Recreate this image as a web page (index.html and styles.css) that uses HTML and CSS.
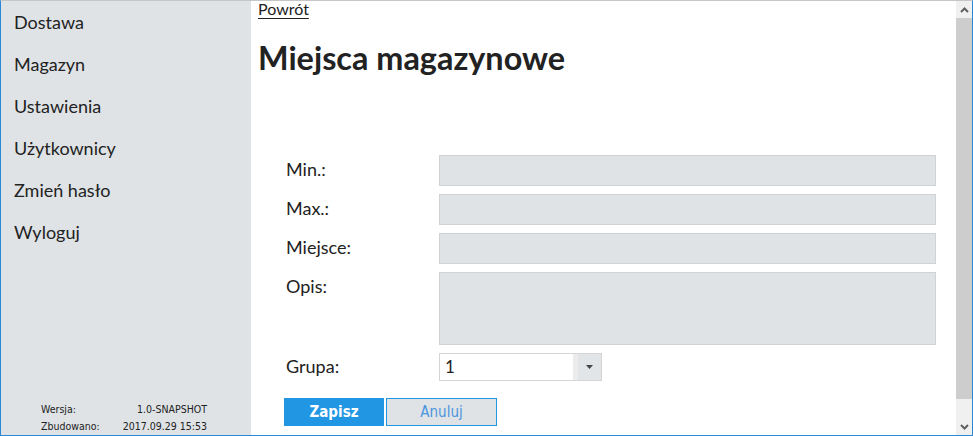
FILE: index.html
```html
<!DOCTYPE html>
<html lang="pl">
<head>
<meta charset="utf-8">
<title>Miejsca magazynowe</title>
<link rel="stylesheet" href="styles.css">
</head>
<body>
<div class="window">
  <aside class="sidebar">
    <nav class="menu">
      <a href="#">Dostawa</a>
      <a href="#">Magazyn</a>
      <a href="#">Ustawienia</a>
      <a href="#">Użytkownicy</a>
      <a href="#">Zmień hasło</a>
      <a href="#">Wyloguj</a>
    </nav>
    <dl class="build">
      <dt>Wersja:</dt><dd>1.0-SNAPSHOT</dd>
      <dt>Zbudowano:</dt><dd>2017.09.29 15:53</dd>
    </dl>
  </aside>
  <main class="content">
    <a class="back" href="#">Powrót</a>
    <h1 class="title">Miejsca magazynowe</h1>
    <form class="form">
      <label class="label">Min.:</label>
      <div class="field"></div>
      <label class="label">Max.:</label>
      <div class="field"></div>
      <label class="label">Miejsce:</label>
      <div class="field"></div>
      <label class="label">Opis:</label>
      <div class="field field-area"></div>
      <label class="label label-select">Grupa:</label>
      <div class="select">
        <span class="select-value">1</span>
        <span class="select-sep"></span>
        <span class="select-btn"><svg width="7" height="4" viewBox="0 0 7 4"><path d="M0 0h7L3.5 4z" fill="#444"/></svg></span>
      </div>
      <div class="actions">
        <button type="button" class="btn btn-primary">Zapisz</button>
        <button type="button" class="btn btn-secondary">Anuluj</button>
      </div>
    </form>
  </main>
  <div class="scrollbar">
    <div class="sb-btn"><svg width="9" height="6" viewBox="0 0 9 6"><path d="M1 5L4.5 1.5L8 5" fill="none" stroke="#606060" stroke-width="2"/></svg></div>
    <div class="sb-thumb"></div>
    <div class="sb-track"></div>
    <div class="sb-btn"><svg width="9" height="6" viewBox="0 0 9 6"><path d="M1 1L4.5 4.5L8 1" fill="none" stroke="#606060" stroke-width="2"/></svg></div>
  </div>
</div>
</body>
</html>
```

FILE: styles.css
```css
* { box-sizing: border-box; }
html, body { margin: 0; padding: 0; }
body {
  font-family: Lato, "Noto Sans", sans-serif;
  color: #222;
  background: #fff;
}
.window {
  width: 973px;
  height: 436px;
  border-top: 1px solid #c6c6c6;
  border-left: 1px solid #2a88d6;
  border-right: 1px solid #2a88d6;
  border-bottom: 1px solid #2a88d6;
  display: flex;
  overflow: hidden;
}
.sidebar {
  width: 250px;
  flex: none;
  background: #dfe3e6;
  display: flex;
  flex-direction: column;
  justify-content: space-between;
}
.menu {
  display: flex;
  flex-direction: column;
  padding-left: 13px;
}
.menu a {
  font-size: 18px;
  line-height: 42px;
  color: #222;
  text-decoration: none;
}
.build {
  margin: 0 0 0 40px;
  width: 166px;
  display: grid;
  grid-template-columns: 1fr auto;
  font-family: "DejaVu Sans Condensed", "DejaVu Sans", sans-serif;
  font-size: 10.5px;
  line-height: 17px;
  color: #222;
}
.build dt, .build dd { margin: 0; }
.build dd { text-align: right; }
.content {
  flex: 1;
  min-width: 0;
  padding-left: 7px;
}
.back {
  display: block;
  width: max-content;
  font-size: 16px;
  line-height: 16px;
  color: #222;
  text-decoration: underline;
  text-underline-offset: 3px;
}
.title {
  margin: 22px 0 78px;
  font-size: 32.4px;
  line-height: 38px;
  font-weight: 700;
  color: #222;
}
.form {
  margin-left: 26px;
  width: 652px;
  display: grid;
  grid-template-columns: 155px 497px;
  row-gap: 8px;
  align-items: start;
}
.label {
  padding: 3px 0 0 2px;
  font-size: 18px;
  line-height: normal;
}
.label-select { padding-top: 2px; }
.field {
  height: 31px;
  background: #dfe3e6;
  border: 1px solid #cfd3d6;
}
.field-area { height: 73px; }
.select {
  width: 163px;
  height: 28px;
  border: 1px solid #d4d4d4;
  background: #fff;
  display: flex;
}
.select-value {
  flex: 1;
  padding-left: 5px;
  font-size: 17px;
  line-height: 26px;
}
.select-sep {
  width: 5px;
  background: #ececec;
}
.select-btn {
  width: 23px;
  background: #e1e5e8;
  display: flex;
  align-items: center;
  justify-content: center;
}
.actions {
  grid-column: 1 / -1;
  margin-top: 9px;
  display: flex;
  gap: 2px;
}
.btn {
  height: 28px;
  padding: 0;
  font-family: "DejaVu Sans Condensed", "DejaVu Sans", sans-serif;
  font-size: 15px;
  border: 1px solid #2196e3;
}
.btn-primary {
  width: 100px;
  background: #2196e3;
  color: #fff;
  font-weight: 700;
}
.btn-secondary {
  width: 111px;
  background: #dfe3e6;
  color: #4b95de;
}
.scrollbar {
  width: 16px;
  flex: none;
  display: flex;
  flex-direction: column;
  background: #f0f0f0;
}
.sb-btn {
  height: 17px;
  display: flex;
  align-items: center;
  justify-content: center;
}
.sb-thumb {
  height: 381px;
  background: #cdcdcd;
}
.sb-track { flex: 1; }
```
